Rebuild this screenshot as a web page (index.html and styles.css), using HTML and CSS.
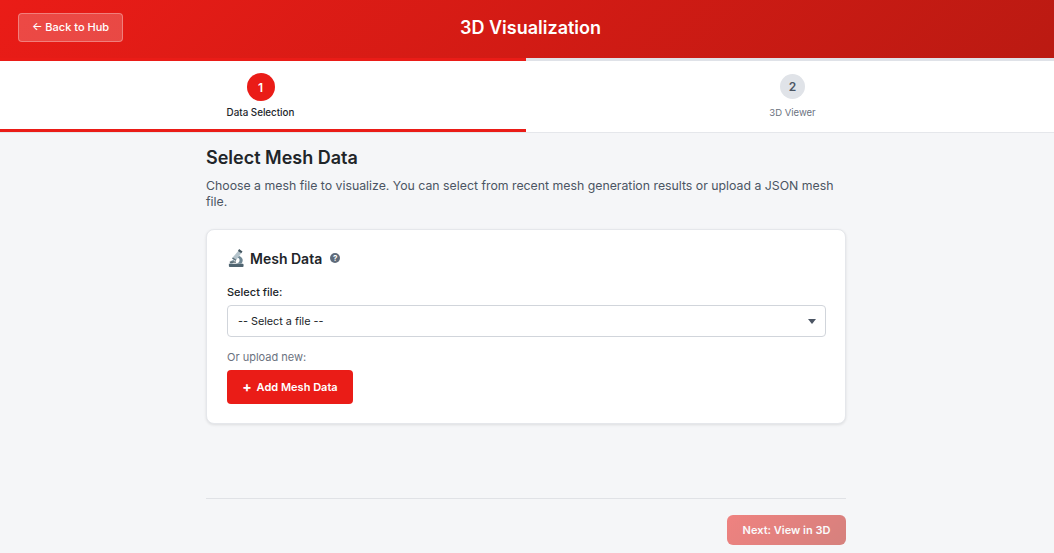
FILE: index.html
```html
<!DOCTYPE html>
<html lang="en">
<head>
    <meta charset="UTF-8">
    <meta name="viewport" content="width=device-width, initial-scale=1.0">
    <title>3D Visualization</title>
    <link rel="stylesheet" href="styles.css">
</head>
<body>
    <header class="top-bar">
        <a href="#" class="back-btn">← Back to Hub</a>
        <h1>3D Visualization</h1>
    </header>

    <!-- Wizard steps -->
    <nav class="steps">
        <div class="step active">
            <div class="step-num">1</div>
            <div class="step-label">Data Selection</div>
        </div>
        <div class="step">
            <div class="step-num">2</div>
            <div class="step-label">3D Viewer</div>
        </div>
    </nav>

    <main class="content">
        <h2>Select Mesh Data</h2>
        <p class="intro">Choose a mesh file to visualize. You can select from recent mesh generation results or upload a JSON mesh file.</p>

        <section class="card">
            <div class="card-title">
                <svg class="scope" viewBox="0 0 18 20" width="16" height="18">
                    <path d="M1 16.500h15.500a1 1 0 0 1 1 1V19a1 1 0 0 1-1 1H2a1 1 0 0 1-1-1z" fill="#4f6470"/>
                    <path d="M2 16.500c.5-2.500 2-4 4.500-4.500l1 2c-1.500.5-2.300 1.300-2.500 2.500z" fill="#8fa4af"/>
                    <path d="M12 7.500c3.500 1 5 3.500 4.500 6-.2 1.300-.8 2.300-1.500 3H9c2.500-.5 4-2 4-4 0-1.500-.8-2.500-2.500-3z" fill="#6f8794"/>
                    <path d="M11.500 2l3.500 2.500-5.500 7.500-4-2.800z" fill="#b4c3cb"/>
                    <path d="M12.500 0l3.800 2.700-1.400 2-3.800-2.700z" fill="#42555f"/>
                    <path d="M5.500 9.200l4 2.800-1 1.400-4-2.800z" fill="#5c717c"/>
                    <rect x="2" y="14" width="7" height="1.200" fill="#3c4d56"/>
                </svg>
                <span>Mesh Data</span>
                <span class="help">?</span>
            </div>
            <label class="field-label">Select file:</label>
            <div class="select-box">
                <span>-- Select a file --</span>
                <span class="caret"></span>
            </div>
            <div class="upload-label">Or upload new:</div>
            <button class="add-btn"><span class="plus">+</span> Add Mesh Data</button>
        </section>

        <div class="actions">
            <button class="next-btn">Next: View in 3D</button>
        </div>
    </main>
</body>
</html>
```

FILE: styles.css
```css
* {
    box-sizing: border-box;
    font-family: Inter, "Liberation Sans", sans-serif;
}

body {
    margin: 0;
    background: #f5f6f8;
    color: #212529;
    overflow: hidden;
}

.top-bar {
    height: 58px;
    display: flex;
    align-items: center;
    justify-content: center;
    padding: 0 0 4px 7px;
    position: relative;
    background: linear-gradient(135deg, #ea1c17 0%, #bb1a12 100%);
}

.top-bar h1 {
    margin: 0;
    color: #fff;
    font-size: 18px;
    font-weight: 600;
}

.back-btn {
    position: absolute;
    left: 18px;
    top: 13px;
    width: 105px;
    height: 29px;
    padding-bottom: 1px;
    display: flex;
    align-items: center;
    justify-content: center;
    color: #fff;
    font-size: 11px;
    font-weight: 500;
    text-decoration: none;
    background: rgba(255, 255, 255, 0.2);
    border: 1px solid rgba(255, 255, 255, 0.3);
    border-radius: 4px;
}

.steps {
    display: flex;
    background: #fff;
    border-bottom: 1px solid #e5e7eb;
}

.step {
    flex: 0 0 528px;
    height: 74px;
    display: flex;
    flex-direction: column;
    align-items: center;
    padding: 13px 0 0 5px;
    border-top: 3px solid #dfe2e8;
    border-bottom: 3px solid transparent;
}

.step.active {
    flex: 0 0 526px;
    padding: 13px 5px 0 0;
    border-top-color: #ea1c17;
    border-bottom-color: #ea1c17;
}

.step-num {
    width: 25px;
    height: 25px;
    border-radius: 50%;
    display: flex;
    align-items: center;
    justify-content: center;
    font-size: 12px;
    font-weight: 600;
    background: #e0e3e8;
    color: #4b5563;
}

.step.active .step-num {
    width: 28px;
    height: 28px;
    margin-top: -1px;
    background: #ea1c17;
    color: #fff;
}

.step-label {
    margin-top: 8px;
    font-size: 9.500px;
    color: #6b7280;
}

.step.active .step-label {
    margin-top: 6px;
    font-size: 9.800px;
    color: #212529;
    font-weight: 500;
}

.content {
    width: 640px;
    margin-left: 206px;
    padding-top: 14px;
}

h2 {
    margin: 0;
    font-size: 18px;
    line-height: 22px;
    font-weight: 600;
    color: #212529;
}

.intro {
    margin: 9px 0 0;
    font-size: 12.300px;
    line-height: 16px;
    color: #4b5563;
}

.card {
    margin-top: 19px;
    height: 195px;
    padding: 18px 19px 18px 20px;
    background: #fff;
    border: 1px solid #e5e7eb;
    border-radius: 8px;
    box-shadow: 0 1px 3px rgba(0, 0, 0, 0.1);
}

.card-title {
    display: flex;
    align-items: center;
    height: 20px;
    font-size: 14px;
    font-weight: 600;
    color: #212529;
}

.scope {
    margin: 0 6px 0 1px;
}

.help {
    width: 10px;
    height: 10px;
    margin-left: 8px;
    border-radius: 50%;
    background: #5f6b7a;
    color: #fff;
    font-size: 8px;
    font-weight: 700;
    line-height: 10px;
    text-align: center;
}

.field-label {
    display: block;
    margin-top: 17px;
    font-size: 11px;
    line-height: 14px;
    font-weight: 500;
    color: #212529;
}

.select-box {
    height: 32px;
    margin-top: 6px;
    padding: 0 10px;
    display: flex;
    align-items: center;
    justify-content: space-between;
    font-size: 10.800px;
    color: #212529;
    background: #fff;
    border: 1px solid #d1d5db;
    border-radius: 4px;
}

.caret {
    width: 0;
    height: 0;
    margin-right: -1px;
    border-left: 4.500px solid transparent;
    border-right: 4.500px solid transparent;
    border-top: 5px solid #4b5563;
}

.upload-label {
    margin-top: 13px;
    font-size: 11px;
    line-height: 14px;
    color: #6b7280;
}

.add-btn {
    display: block;
    width: 126px;
    height: 34px;
    margin-top: 6px;
    background: #ea1c17;
    color: #fff;
    border: none;
    border-radius: 4px;
    font-size: 11px;
    font-weight: 600;
}

.plus {
    font-size: 14px;
    font-weight: 700;
    line-height: 1;
    margin-right: 2px;
    vertical-align: -1px;
}

.actions {
    margin-top: 74px;
    padding-top: 16px;
    border-top: 1px solid #e0e2e6;
    display: flex;
    justify-content: flex-end;
}

.next-btn {
    width: 119px;
    height: 30px;
    color: #fff;
    border: none;
    border-radius: 6px;
    font-size: 11px;
    font-weight: 600;
    background: linear-gradient(135deg, #ea1c17 0%, #bb1a12 100%);
    opacity: 0.53;
}
```
